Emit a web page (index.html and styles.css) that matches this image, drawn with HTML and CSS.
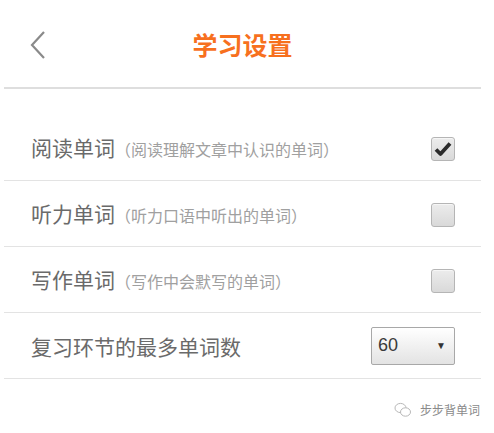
FILE: index.html
```html
<!DOCTYPE html>
<html lang="zh-CN">
<head>
    <meta charset="UTF-8">
    <meta name="viewport" content="width=device-width, initial-scale=1.0">
    <title>学习设置</title>
    <link rel="stylesheet" href="styles.css">
</head>
<body>

<div class="page">
    <div class="header">
        <a class="back" href="#">
            <svg width="18" height="30" viewBox="0 0 18 30">
                <path d="M15 2 L3 15 L15 28" fill="none" stroke="#8a8a8a" stroke-width="2.2"/>
            </svg>
        </a>
        <h1>学习设置</h1>
        <span></span>
    </div>

    <div class="settings">
        <div class="row">
            <div class="label">阅读单词<span class="hint">（阅读理解文章中认识的单词）</span></div>
            <span class="checkbox checked">
                <svg width="18" height="16" viewBox="0 0 18 16">
                    <path d="M2 8.5 L6.5 13 L16 2.5" fill="none" stroke="#2b2b2b" stroke-width="3.8" stroke-linejoin="round"/>
                </svg>
            </span>
        </div>
        <div class="row">
            <div class="label">听力单词<span class="hint">（听力口语中听出的单词）</span></div>
            <span class="checkbox"></span>
        </div>
        <div class="row">
            <div class="label">写作单词<span class="hint">（写作中会默写的单词）</span></div>
            <span class="checkbox"></span>
        </div>
        <div class="row">
            <div class="label">复习环节的最多单词数</div>
            <div class="select">
                <span>60</span>
                <span class="arrow">▼</span>
            </div>
        </div>
    </div>

    <div class="watermark">
        <svg width="18" height="16" viewBox="0 0 18 16">
            <ellipse cx="6.5" cy="6" rx="5.5" ry="4.6" fill="none" stroke="#b8b8b8" stroke-width="1"/>
            <ellipse cx="11.5" cy="10" rx="5" ry="4.2" fill="#fff" stroke="#b8b8b8" stroke-width="1"/>
        </svg>
        <span>步步背单词</span>
    </div>
</div>

</body>
</html>
```

FILE: styles.css
```css
body {
    margin: 0;
    background: #fff;
    font-family: "Noto Sans CJK SC", "Noto Sans", sans-serif;
}

.page {
    width: 477px;
    margin-left: 4px;
}

.header {
    display: grid;
    grid-template-columns: 1fr auto 1fr;
    align-items: center;
    height: 87px;
    border-bottom: 2px solid #dedede;
}

.back {
    display: flex;
    padding-left: 25px;
    padding-top: 2px;
}

h1 {
    margin: 0;
    font-size: 25px;
    line-height: 30px;
    font-weight: bold;
    color: #f7701e;
}

.settings {
    margin-top: 26px;
}

.row {
    display: flex;
    align-items: center;
    justify-content: space-between;
    height: 65px;
    padding: 0 26px 0 27px;
    border-bottom: 1px solid #e3e3e3;
}

.label {
    font-size: 21px;
    line-height: 28px;
    color: #6a6a6a;
}

.hint {
    font-size: 16px;
    color: #a0a0a0;
}

.checkbox {
    display: flex;
    align-items: center;
    justify-content: center;
    width: 22px;
    height: 22px;
    border: 1px solid #b5b5b5;
    border-radius: 3px;
    background: linear-gradient(#ececec, #d9d9d9);
    box-shadow: inset 0 1px 0 #f6f6f6;
    margin-top: 2px;
}

.select {
    display: flex;
    align-items: center;
    justify-content: space-between;
    box-sizing: border-box;
    width: 84px;
    height: 38px;
    padding: 0 8px 0 6px;
    border: 1px solid #a8a8a8;
    border-radius: 2px;
    background: linear-gradient(#ffffff, #e3e3e3);
    font-family: "Liberation Sans", sans-serif;
    font-size: 18px;
    color: #3a3a3a;
}

.select .arrow {
    font-size: 10px;
    color: #333;
}

.watermark {
    display: flex;
    justify-content: flex-end;
    align-items: center;
    gap: 8px;
    margin-top: 22px;
    padding-right: 1px;
    font-size: 12px;
    color: #8a8a8a;
}
```
